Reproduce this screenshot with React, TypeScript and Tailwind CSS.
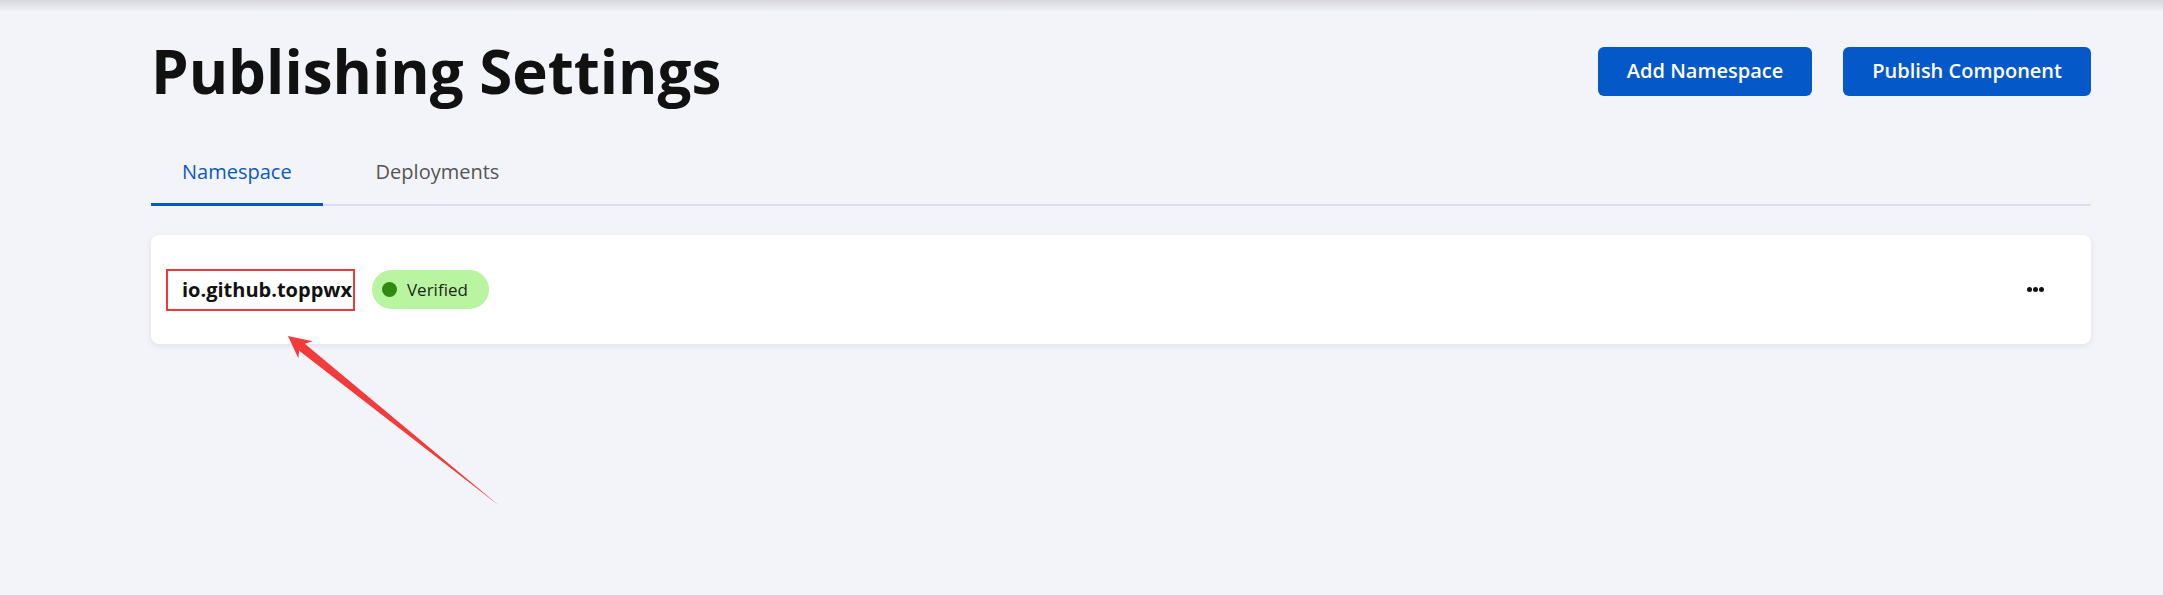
import React from 'react';

const tabs = ['Namespace', 'Deployments'];

function MoreDots() {
  return (
    <svg width="17" height="5" viewBox="0 0 17 5" aria-hidden="true">
      <circle cx="2.5" cy="2.5" r="2.5" fill="#111" />
      <circle cx="8.5" cy="2.5" r="2.5" fill="#111" />
      <circle cx="14.5" cy="2.5" r="2.5" fill="#111" />
    </svg>
  );
}

export default function App() {
  return (
    <div className="relative min-h-[595px] bg-[#f3f4f9] font-['Open_Sans',sans-serif] overflow-hidden">
      {/* shadow from the bar above */}
      <div className="h-3 bg-gradient-to-b from-[#d6d6dc] to-[#f3f4f9]" />

      <div className="pl-[151px] pr-[72px]">
        {/* header */}
        <div className="mt-[29px] flex items-center justify-between">
          <h1 className="text-6xl font-bold text-[#111111]">Publishing Settings</h1>
          <div className="flex gap-[31px]">
            <button className="h-[49px] px-[29px] rounded-md bg-[#0558c8] text-white text-[20px] font-semibold">
              Add Namespace
            </button>
            <button className="h-[49px] px-[29px] rounded-md bg-[#0558c8] text-white text-[20px] font-semibold">
              Publish Component
            </button>
          </div>
        </div>

        {/* tabs */}
        <div className="mt-[57px] flex gap-[22px] border-b-2 border-[#dddcf3]">
          {tabs.map((tab, i) => (
            <div
              key={tab}
              className={
                i === 0
                  ? 'px-[31px] pb-[17px] -mb-[2px] border-b-[3px] border-[#0558c8] text-[20px] leading-7 text-[#0b57c8]'
                  : 'px-[31px] pb-[17px] -mb-[2px] border-b-[3px] border-transparent text-[20px] leading-7 text-[#555555]'
              }
            >
              {tab}
            </div>
          ))}
        </div>

        {/* namespace card */}
        <div className="mt-[29px] h-[109px] rounded-lg bg-white shadow-[0_2px_6px_rgba(20,20,60,0.08)] flex items-center pl-[31px] pr-[47px]">
          <span className="relative text-[20px] leading-7 font-bold text-[#111111]">
            io.github.toppwx
            <span className="absolute -left-[16px] -right-[3px] -top-[7px] -bottom-[7px] border-2 border-[#f03a3a]" />
          </span>
          <span className="ml-[20px] h-[39px] flex items-center gap-[10px] pl-[10px] pr-[21px] rounded-full bg-[#b9f5a0] text-[17px] text-[#1d261b]">
            <span className="w-[15px] h-[15px] rounded-full bg-[#2e8a10]" />
            Verified
          </span>
          <div className="ml-auto flex items-center">
            <MoreDots />
          </div>
        </div>
      </div>

      {/* annotation arrow */}
      <svg className="absolute left-0 top-0 pointer-events-none" width="2163" height="595" aria-hidden="true">
        <polygon
          points="288,336 312.7,341.3 304.8,343.8 499.3,505.7 299.2,350.8 298.3,358.3"
          fill="#f23b3b"
        />
      </svg>
    </div>
  );
}
